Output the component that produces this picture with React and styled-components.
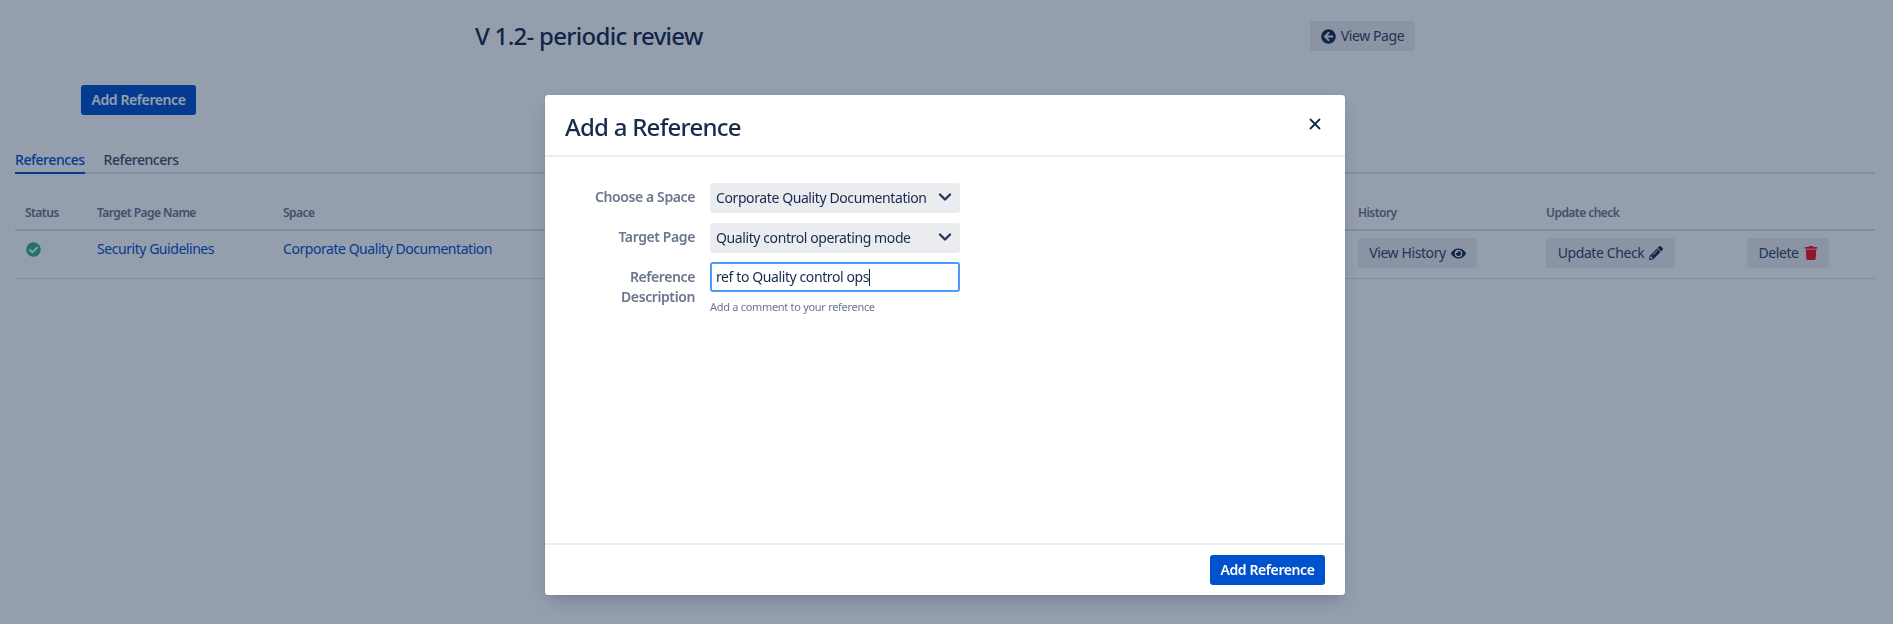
import React from "react";
import styled, { createGlobalStyle } from "styled-components";
import { FaArrowCircleLeft, FaEye, FaPencilAlt, FaTrash, FaCheckCircle } from "react-icons/fa";

const FONT = `"Noto Sans", "Open Sans", sans-serif`;

const Global = createGlobalStyle`
  html, body { margin: 0; padding: 0; background: #fff; }
  body { font-family: ${FONT}; font-size: 14px; line-height: 20px; color: #172B4D; letter-spacing: -0.4px; }
  * { box-sizing: border-box; }
`;

const Page = styled.div`
  height: 624px;
  overflow: hidden;
  padding: 20px 18px 0 15px;
`;

const TopBar = styled.div`
  display: grid;
  grid-template-columns: 460px 835px auto;
  align-items: center;
  height: 30px;
`;

const Title = styled.h1`
  grid-column: 2 / 2;
  margin: 0;
  font-size: 24px;
  line-height: 32px;
  font-weight: 500;
  letter-spacing: -0.7px;
  color: #172B4D;
`;

const Button = styled.button`
  display: inline-flex;
  align-items: center;
  justify-content: center;
  gap: 5px;
  height: 30px;
  width: ${(p) => p.$width}px;
  padding: 0;
  border: 0;
  border-radius: 3px;
  font: inherit;
  letter-spacing: inherit;
  color: ${(p) => (p.$primary ? "#fff" : "#344563")};
  font-weight: ${(p) => (p.$primary ? 600 : 400)};
  background: ${(p) => (p.$primary ? "#0052CC" : "rgba(9,30,66,0.08)")};
  svg { flex: none; }
`;

const AddRow = styled.div`
  margin-top: 35px;
  padding-left: 66px;
  display: flex;
`;

const Tabs = styled.div`
  display: flex;
  gap: 19px;
  margin-top: 27px;
  height: 32px;
  border-bottom: 2px solid #DFE1E6;
`;

const Tab = styled.div`
  height: 32px;
  padding-top: 8px;
  font-weight: 500;
  letter-spacing: -0.45px;
  color: ${(p) => (p.$active ? "#0052CC" : "#42526E")};
  border-bottom: 2px solid ${(p) => (p.$active ? "#0052CC" : "transparent")};
`;

const TableRow = styled.div`
  display: grid;
  grid-template-columns: 72px 186px 1075px 188px 201px 1fr;
  padding-left: 10px;
  align-items: center;
`;

const HeadRow = styled(TableRow)`
  margin-top: 27px;
  height: 30px;
  border-bottom: 2px solid #DFE1E6;
  padding-bottom: 4px;
`;

const Th = styled.div`
  font-size: 12px;
  line-height: 16px;
  font-weight: 600;
  letter-spacing: -0.55px;
  color: #6B778C;
`;

const BodyRow = styled(TableRow)`
  height: 48px;
  padding-bottom: 3px;
  border-bottom: 1px solid #DFE1E6;
`;

const LinkText = styled.a`
  color: #0052CC;
  margin-top: -8px;
  letter-spacing: -0.45px;
`;

const StatusCell = styled.div`
  display: flex;
  margin-top: -8px;
  padding-left: 1px;
  color: #36B37E;
`;

const Overlay = styled.div`
  position: fixed;
  inset: 0;
  background: rgba(9, 30, 66, 0.43);
`;

const Modal = styled.div`
  position: fixed;
  left: 545px;
  top: 95px;
  width: 800px;
  height: 500px;
  background: #fff;
  border-radius: 3px;
  box-shadow: 0 8px 16px -4px rgba(9, 30, 66, 0.25), 0 0 1px rgba(9, 30, 66, 0.31);
  display: flex;
  flex-direction: column;
`;

const ModalHeader = styled.div`
  height: 62px;
  flex: none;
  padding: 4px 20px 0;
  display: flex;
  align-items: center;
  justify-content: space-between;
  border-bottom: 2px solid #EBECF0;
`;

const ModalTitle = styled.h2`
  margin: 0;
  font-size: 24px;
  line-height: 32px;
  font-weight: 500;
  letter-spacing: -0.75px;
  color: #172B4D;
`;

const CloseIcon = styled.svg`
  width: 12px;
  height: 12px;
  margin-right: 4px;
  margin-bottom: 6px;
`;

const ModalBody = styled.div`
  flex: 1;
  padding: 26px 0 0 0;
  display: grid;
  grid-template-columns: 150px 250px;
  column-gap: 15px;
  row-gap: 10px;
  align-content: start;
`;

const Label = styled.label`
  text-align: right;
  font-weight: 600;
  color: #6B778C;
  padding: 4px 0 0 50px;
`;

const Select = styled.div`
  height: 30px;
  background: #EBECF0;
  border-radius: 3px;
  padding: 0 6px;
  display: flex;
  align-items: center;
  justify-content: space-between;
  color: #172B4D;
`;

const Chevron = styled.svg`
  width: 14px;
  height: 9px;
  margin-right: 2px;
  margin-top: -2px;
  flex: none;
`;

const InputCol = styled.div`
  display: flex;
  flex-direction: column;
  margin-top: -1px;
`;

const InputBox = styled.div`
  height: 30px;
  border: 2px solid #4C9AFF;
  border-radius: 3px;
  padding: 0 4px;
  display: flex;
  align-items: center;
  color: #172B4D;
`;

const Caret = styled.span`
  width: 1px;
  height: 17px;
  background: #172B4D;
`;

const Help = styled.div`
  margin-top: 7px;
  font-size: 11px;
  line-height: 16px;
  letter-spacing: -0.3px;
  color: #6B778C;
`;

const ModalFooter = styled.div`
  height: 52px;
  flex: none;
  border-top: 2px solid #EBECF0;
  padding: 10px 20px 0;
  display: flex;
  justify-content: flex-end;
  align-items: flex-start;
`;

const TrashIcon = styled(FaTrash)`
  color: #F5101F;
`;

const Chev = () => (
  <Chevron viewBox="0 0 14 9">
    <path d="M2 1.5 L7 6.5 L12 1.5" fill="none" stroke="#253858" strokeWidth="2.4" strokeLinecap="round" strokeLinejoin="round" />
  </Chevron>
);

export default function App() {
  return (
    <>
      <Global />
      <Page>
        <TopBar>
          <Title>V 1.2- periodic review</Title>
          <Button $width={105}><FaArrowCircleLeft size={15} color="#172B4D" />View Page</Button>
        </TopBar>
        <AddRow><Button $primary $width={115}>Add Reference</Button></AddRow>
        <Tabs>
          <Tab $active>References</Tab>
          <Tab>Referencers</Tab>
        </Tabs>
        <HeadRow>
          <Th>Status</Th>
          <Th>Target Page Name</Th>
          <Th>Space</Th>
          <Th>History</Th>
          <Th>Update check</Th>
          <Th />
        </HeadRow>
        <BodyRow>
          <StatusCell><FaCheckCircle size={15} /></StatusCell>
          <LinkText>Security Guidelines</LinkText>
          <LinkText>Corporate Quality Documentation</LinkText>
          <div><Button $width={119}>View History<FaEye size={15} color="#172B4D" /></Button></div>
          <div><Button $width={129}>Update Check<FaPencilAlt size={14} color="#172B4D" /></Button></div>
          <div><Button $width={82}>Delete<TrashIcon size={14} /></Button></div>
        </BodyRow>
      </Page>
      <Overlay />
      <Modal>
        <ModalHeader>
          <ModalTitle>Add a Reference</ModalTitle>
          <CloseIcon viewBox="0 0 12 12">
            <path d="M1.5 1.5 L10.5 10.5 M10.5 1.5 L1.5 10.5" stroke="#172B4D" strokeWidth="1.8" strokeLinecap="round" />
          </CloseIcon>
        </ModalHeader>
        <ModalBody>
          <Label>Choose a Space</Label>
          <Select>Corporate Quality Documentation<Chev /></Select>
          <Label>Target Page</Label>
          <Select>Quality control operating mode<Chev /></Select>
          <Label>Reference Description</Label>
          <InputCol>
            <InputBox>ref to Quality control ops<Caret /></InputBox>
            <Help>Add a comment to your reference</Help>
          </InputCol>
        </ModalBody>
        <ModalFooter>
          <Button $primary $width={115}>Add Reference</Button>
        </ModalFooter>
      </Modal>
    </>
  );
}
